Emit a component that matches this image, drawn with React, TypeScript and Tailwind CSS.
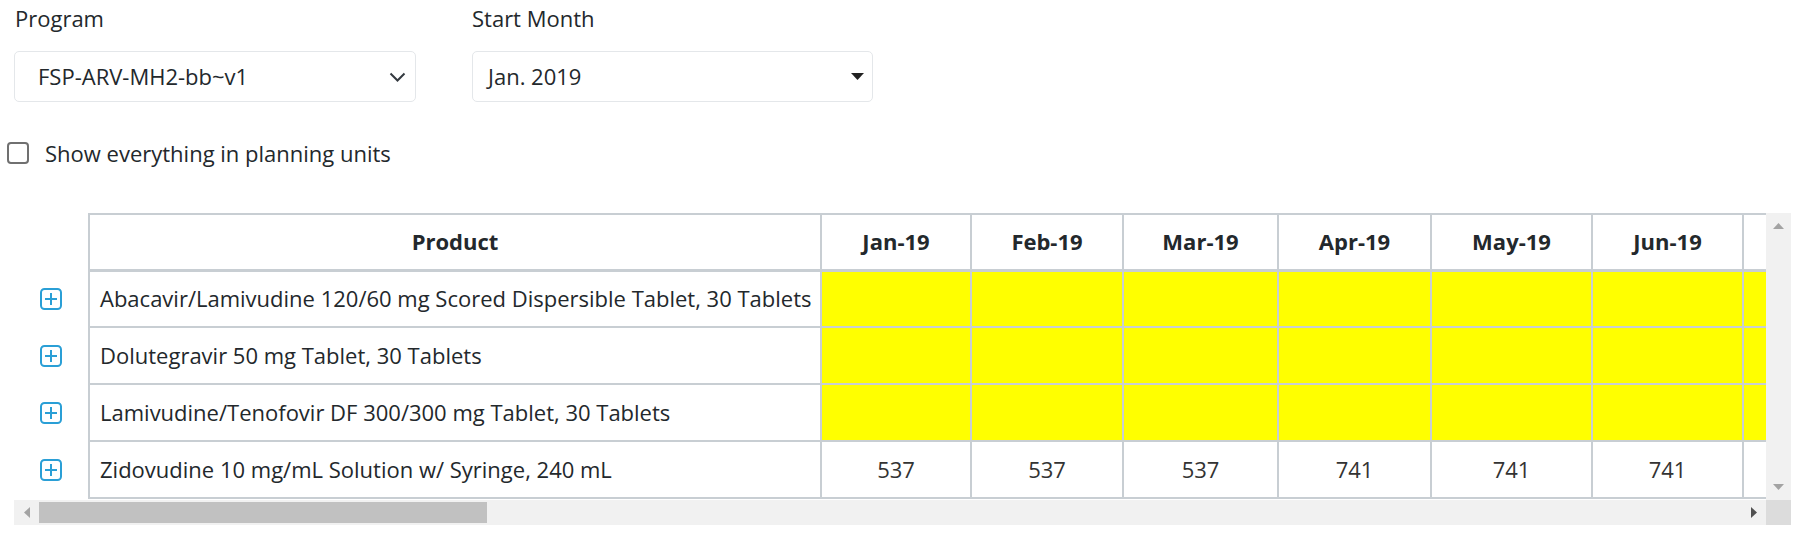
import React from "react";

const months = ["Jan-19", "Feb-19", "Mar-19", "Apr-19", "May-19", "Jun-19", ""];
const monthWidths = ["w-[150px]", "w-[152px]", "w-[155px]", "w-[153px]", "w-[161px]", "w-[151px]", "w-[150px]"];

interface Row {
  name: string;
  values: (number | null)[];
}

const rows: Row[] = [
  { name: "Abacavir/Lamivudine 120/60 mg Scored Dispersible Tablet, 30 Tablets", values: [null, null, null, null, null, null, null] },
  { name: "Dolutegravir 50 mg Tablet, 30 Tablets", values: [null, null, null, null, null, null, null] },
  { name: "Lamivudine/Tenofovir DF 300/300 mg Tablet, 30 Tablets", values: [null, null, null, null, null, null, null] },
  { name: "Zidovudine 10 mg/mL Solution w/ Syringe, 240 mL", values: [537, 537, 537, 741, 741, 741, -1] },
];

function PlusSquare() {
  return (
    <svg width="22" height="22" viewBox="0 0 22 22" fill="none">
      <rect x="1" y="1" width="20" height="20" rx="3.5" stroke="#2a9fd6" strokeWidth="2" />
      <path d="M11 5v12M5 11h12" stroke="#2a9fd6" strokeWidth="2" />
    </svg>
  );
}

export default function App() {
  return (
    <div className="w-[1801px] h-[537px] bg-white text-[#23282c] font-['Open_Sans',sans-serif] text-[22px] overflow-hidden">
      <div className="pl-[14px] pt-[3px]">
        {/* filters */}
        <div className="flex gap-[56px]">
          <div className="w-[402px]">
            <div className="h-[30px] leading-[30px] pl-[1px]">Program</div>
            <div className="mt-[18px] h-[51px] rounded-[5px] border border-[#e4e7ea] flex items-center justify-between pl-[23px] pr-[9px]">
              <span>FSP-ARV-MH2-bb~v1</span>
              <svg width="17" height="10" viewBox="0 0 17 10" fill="none">
                <path d="M1.5 1.5l7 7 7-7" stroke="#343a40" strokeWidth="2" />
              </svg>
            </div>
          </div>
          <div className="w-[401px]">
            <div className="h-[30px] leading-[30px]">Start Month</div>
            <div className="mt-[18px] h-[51px] rounded-[5px] border border-[#e4e7ea] flex items-center justify-between pl-[15px] pr-[8px]">
              <span>Jan. 2019</span>
              <svg width="13" height="7" viewBox="0 0 13 7">
                <path d="M0 0h13L6.5 7z" fill="#222" />
              </svg>
            </div>
          </div>
        </div>

        {/* checkbox */}
        <label className="flex items-center gap-[16px] -ml-[7px] mt-[40px] h-[22px]">
          <span className="w-[22px] h-[22px] rounded-[4px] border-2 border-[#707070] bg-white" />
          <span>Show everything in planning units</span>
        </label>

        {/* table with scrollbars */}
        <div className="mt-[49px] w-[1777px]">
          <div className="flex">
            <div className="w-[1752px] h-[287px] overflow-hidden">
              <table className="table-fixed border-collapse w-[1879px]">
                <thead>
                  <tr>
                    <th className="w-[75px] h-[56px]" />
                    <th className="w-[732px] h-[56px] border-2 border-b-[3px] border-[#c8ced3] font-bold text-center">
                      Product
                    </th>
                    {months.map((m, i) => (
                      <th
                        key={i}
                        className={`${monthWidths[i]} h-[56px] border-2 border-b-[3px] border-[#c8ced3] font-bold text-center`}
                      >
                        {m}
                      </th>
                    ))}
                  </tr>
                </thead>
                <tbody>
                  {rows.map((r) => (
                    <tr key={r.name}>
                      <td className="h-[57px] pl-[26px] align-middle">
                        <div className="flex items-center">
                          <PlusSquare />
                        </div>
                      </td>
                      <td className="h-[57px] border-2 border-[#c8ced3] pl-[10px] whitespace-nowrap">{r.name}</td>
                      {r.values.map((v, i) => (
                        <td
                          key={i}
                          className={`h-[57px] border-2 border-[#c8ced3] text-center ${v === null ? "bg-[#ffff00]" : "text-[#333]"}`}
                        >
                          {v !== null && v >= 0 ? v : ""}
                        </td>
                      ))}
                    </tr>
                  ))}
                </tbody>
              </table>
            </div>
            {/* vertical scrollbar */}
            <div className="w-[25px] h-[287px] bg-[#f1f1f1] flex flex-col items-center justify-between py-[10px]">
              <svg width="11" height="6" viewBox="0 0 11 6">
                <path d="M0 6h11L5.5 0z" fill="#a3a3a3" />
              </svg>
              <svg width="11" height="6" viewBox="0 0 11 6">
                <path d="M0 0h11L5.5 6z" fill="#a3a3a3" />
              </svg>
            </div>
          </div>
          {/* horizontal scrollbar */}
          <div className="flex h-[25px]">
            <div className="w-[1752px] bg-[#f1f1f1] flex items-center">
              <div className="w-[25px] flex justify-center">
                <svg width="6" height="11" viewBox="0 0 6 11">
                  <path d="M6 0v11L0 5.5z" fill="#a3a3a3" />
                </svg>
              </div>
              <div className="w-[448px] h-[21px] bg-[#c1c1c1]" />
              <div className="flex-1" />
              <div className="w-[25px] flex justify-center">
                <svg width="6" height="11" viewBox="0 0 6 11">
                  <path d="M0 0v11L6 5.5z" fill="#505050" />
                </svg>
              </div>
            </div>
            <div className="w-[25px] bg-[#dcdcdc]" />
          </div>
        </div>
      </div>
    </div>
  );
}
